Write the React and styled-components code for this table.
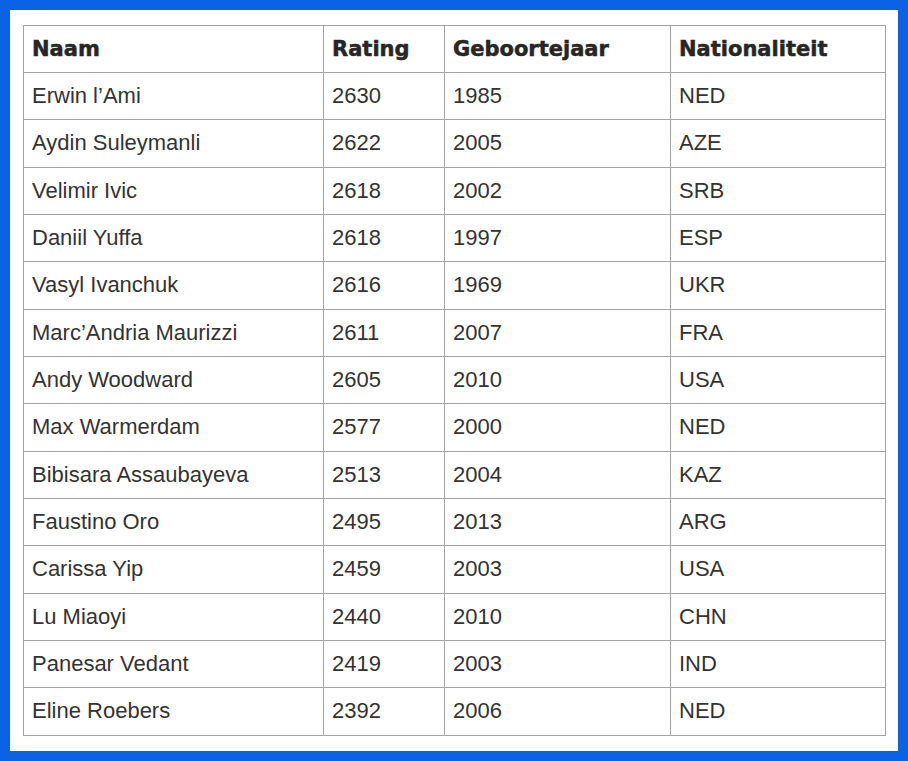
import React from 'react'
import styled, { createGlobalStyle } from 'styled-components'

const Global = createGlobalStyle`
html, body {
  margin: 0;
  padding: 0;
  background: #0b62e4;
}
`

const Frame = styled.div`
width: 908px;
height: 761px;
box-sizing: border-box;
padding: 10px;
background: #0b62e4;
`

const Sheet = styled.div`
width: 100%;
height: 100%;
box-sizing: border-box;
background: #ffffff;
padding: 15px 0 0 13px;
`

const Table = styled.table`
border-collapse: collapse;
table-layout: fixed;
width: 862px;
font-family: "Liberation Sans", Arial, sans-serif;
font-size: 22px;
color: #333333;
`

const Head = styled.th`
text-align: left;
font-family: "DejaVu Sans", "Liberation Sans", sans-serif;
font-size: 21px;
font-weight: bold;
color: #262626;
-webkit-text-stroke: 0.5px #262626;
border: 1px solid #a3a3a3;
padding: 0 8px;
height: 47px;
box-sizing: border-box;
`

const Cell = styled.td`
border: 1px solid #a3a3a3;
padding: 0 8px;
height: 47.33px;
box-sizing: border-box;
`

const rows = [
  ['Erwin l’Ami', '2630', '1985', 'NED'],
  ['Aydin Suleymanli', '2622', '2005', 'AZE'],
  ['Velimir Ivic', '2618', '2002', 'SRB'],
  ['Daniil Yuffa', '2618', '1997', 'ESP'],
  ['Vasyl Ivanchuk', '2616', '1969', 'UKR'],
  ['Marc’Andria Maurizzi', '2611', '2007', 'FRA'],
  ['Andy Woodward', '2605', '2010', 'USA'],
  ['Max Warmerdam', '2577', '2000', 'NED'],
  ['Bibisara Assaubayeva', '2513', '2004', 'KAZ'],
  ['Faustino Oro', '2495', '2013', 'ARG'],
  ['Carissa Yip', '2459', '2003', 'USA'],
  ['Lu Miaoyi', '2440', '2010', 'CHN'],
  ['Panesar Vedant', '2419', '2003', 'IND'],
  ['Eline Roebers', '2392', '2006', 'NED'],
]

const App = () => {
  return (
    <Frame>
      <Global />
      <Sheet>
        <Table>
          <colgroup>
            <col style={{ width: 300 }} />
            <col style={{ width: 121 }} />
            <col style={{ width: 226 }} />
            <col style={{ width: 215 }} />
          </colgroup>
          <thead>
            <tr>
              <Head>Naam</Head>
              <Head>Rating</Head>
              <Head>Geboortejaar</Head>
              <Head>Nationaliteit</Head>
            </tr>
          </thead>
          <tbody>
            {rows.map((r) => (
              <tr key={r[0]}>
                {r.map((c, i) => (
                  <Cell key={i}>{c}</Cell>
                ))}
              </tr>
            ))}
          </tbody>
        </Table>
      </Sheet>
    </Frame>
  )
}

export default App
